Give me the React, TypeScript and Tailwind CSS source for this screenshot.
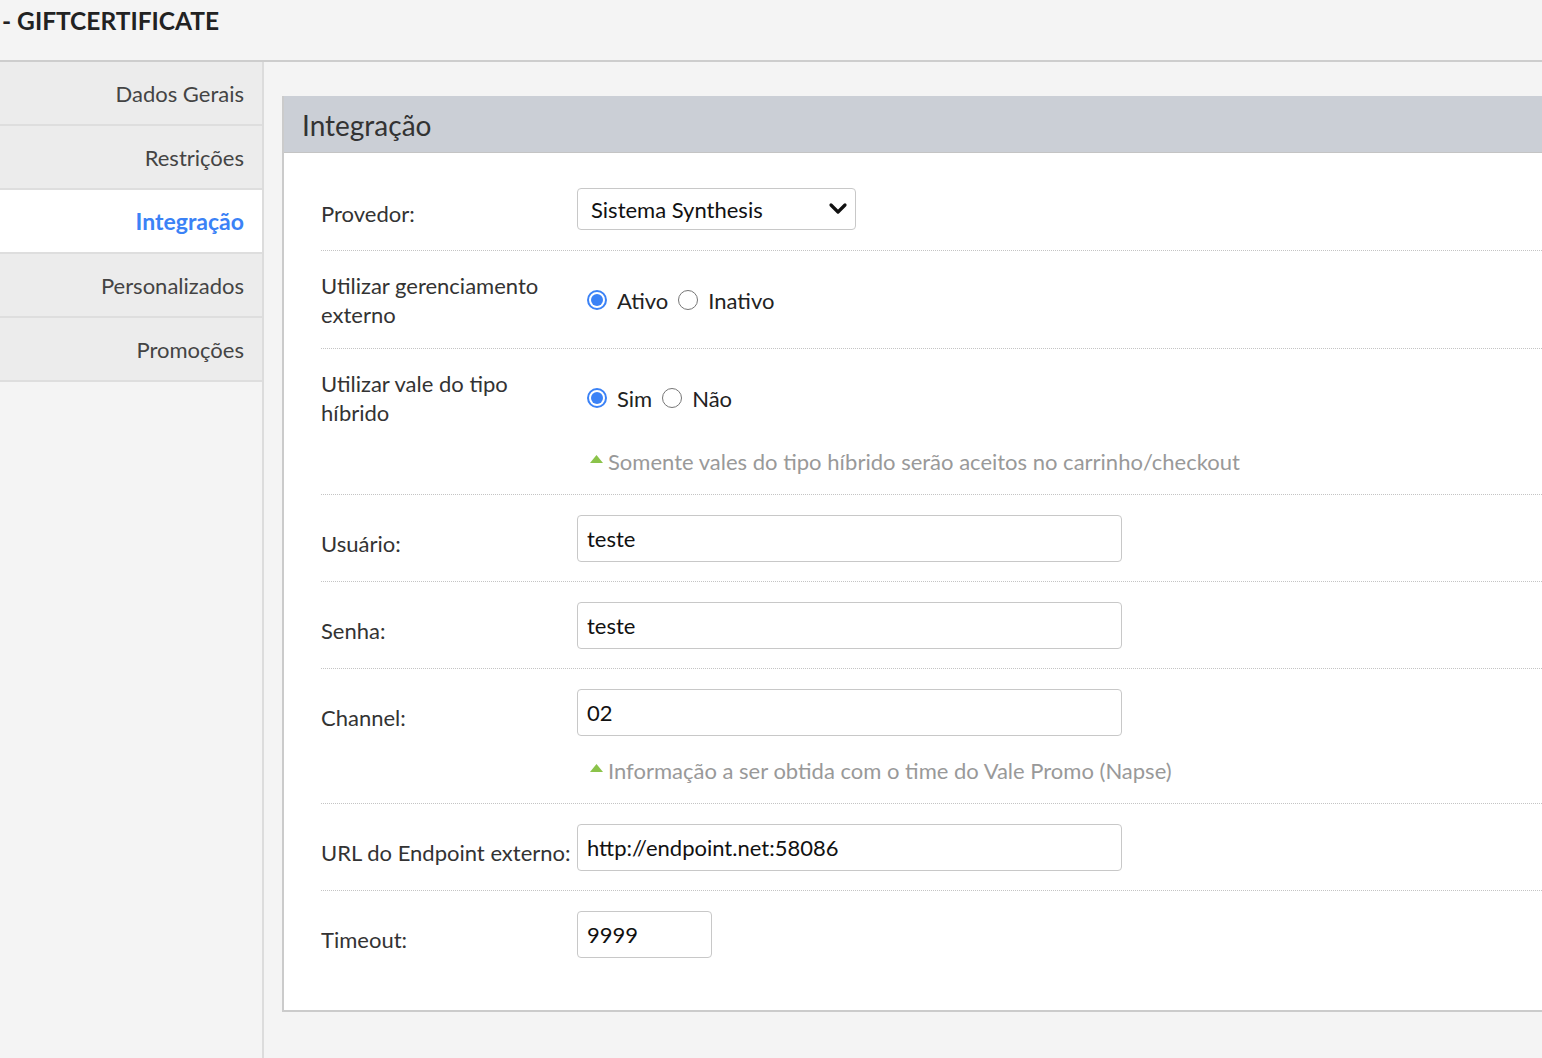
import type { ReactNode } from 'react'

const menu = ['Dados Gerais', 'Restrições', 'Integração', 'Personalizados', 'Promoções']

function Radio({ checked }: { checked?: boolean }) {
  if (checked) {
    return (
      <span className="flex h-[20px] w-[20px] shrink-0 items-center justify-center rounded-full border-2 border-[#3b82f6] bg-white">
        <span className="h-[12px] w-[12px] rounded-full bg-[#3b82f6]" />
      </span>
    )
  }
  return <span className="h-[20px] w-[20px] shrink-0 rounded-full border-[1.5px] border-[#767676] bg-white" />
}

function RadioGroup({ options }: { options: string[] }) {
  return (
    <div className="flex h-[58px] items-center pl-[10px]">
      {options.map((o, i) => (
        <label key={o} className="mr-[10px] flex items-center gap-[10px] text-[#222]">
          <Radio checked={i === 0} />
          <span>{o}</span>
        </label>
      ))}
    </div>
  )
}

function Help({ children }: { children: ReactNode }) {
  return (
    <div className="flex items-center pl-[13px] text-[#999] leading-[26px]">
      <svg width="13" height="8" viewBox="0 0 13 8" className="mr-[5px] -mt-[6px]">
        <polygon points="6.5,0 13,8 0,8" fill="#8bc34a" />
      </svg>
      <span>{children}</span>
    </div>
  )
}

function TextInput({ value, width = 'w-[545px]' }: { value: string; width?: string }) {
  return (
    <input
      readOnly
      value={value}
      className={`${width} h-[47px] rounded-[4px] border border-[#c8c8c8] bg-white pl-[9px] text-[22px] text-[#111] outline-none`}
    />
  )
}

type RowProps = {
  label: ReactNode
  labelBox?: string
  children: ReactNode
  help?: string
  last?: boolean
}

function Row({ label, labelBox = 'h-[47px] pt-[9px]', children, help, last }: RowProps) {
  return (
    <div className={`ml-[37px] ${last ? '' : 'border-b border-dotted border-[#c4c4c4]'}`}>
      <div className={`grid grid-cols-[256px_1fr] items-start pt-[20px] ${last ? 'pb-[52px]' : 'pb-[19px]'}`}>
        <div className={`flex items-center leading-[29px] text-[#333] ${labelBox}`}>{label}</div>
        <div className="flex flex-col">
          {children}
          {help && <div className="mt-[22px]"><Help>{help}</Help></div>}
        </div>
      </div>
    </div>
  )
}

export default function App() {
  return (
    <div className="flex min-h-screen flex-col bg-[#f4f4f4] font-[Lato,'Noto_Sans',sans-serif] text-[22px]">
      <header className="h-[62px] border-b-2 border-[#cdcdcd] pl-[2px] pt-[5px]">
        <h1 className="text-[24.5px] font-bold leading-[32px] text-[#222]">- GIFTCERTIFICATE</h1>
      </header>

      <div className="flex flex-1">
        <aside className="w-[264px] shrink-0 border-r-2 border-[#dcdcdc]">
          {menu.map((m) => {
            const active = m === 'Integração'
            return (
              <div
                key={m}
                className={`flex h-[64px] items-center justify-end border-b-2 border-[#dedede] pr-[18px] ${
                  active ? 'bg-white text-[23px] font-bold text-[#3b82f6]' : 'bg-[#ececec] text-[#444]'
                }`}
              >
                {m}
              </div>
            )
          })}
        </aside>

        <main className="flex-1 overflow-hidden pl-[18px] pt-[34px]">
          <section className="border-b-2 border-l-2 border-[#cbcbcb] bg-white">
            <div className="flex h-[57px] items-center border-b border-[#c4c4c4] bg-[#cbcfd6] pl-[18px] pt-[2px] text-[28px] text-[#333]">
              Integração
            </div>
            <div className="pt-[15px]">
              <Row label="Provedor:" labelBox="h-[42px] pt-[9px]">
                <div className="mb-[1px] flex h-[42px] w-[279px] items-center justify-between rounded-[4px] border border-[#c8c8c8] bg-white pl-[13px] pr-[7px] text-[#111]">
                  <span>Sistema Synthesis</span>
                  <svg width="20" height="14" viewBox="0 0 20 14">
                    <polyline points="3,3 10,10 17,3" fill="none" stroke="#111" strokeWidth="3.2" strokeLinecap="round" strokeLinejoin="round" />
                  </svg>
                </div>
              </Row>
              <Row label={<span>Utilizar gerenciamento<br />externo</span>} labelBox="h-[58px]">
                <RadioGroup options={['Ativo', 'Inativo']} />
              </Row>
              <Row
                label={<span>Utilizar vale do tipo<br />híbrido</span>}
                labelBox="h-[58px]"
                help="Somente vales do tipo híbrido serão aceitos no carrinho/checkout"
              >
                <RadioGroup options={['Sim', 'Não']} />
              </Row>
              <Row label="Usuário:"><TextInput value="teste" /></Row>
              <Row label="Senha:"><TextInput value="teste" /></Row>
              <Row label="Channel:" help="Informação a ser obtida com o time do Vale Promo (Napse)">
                <TextInput value="02" />
              </Row>
              <Row label="URL do Endpoint externo:"><TextInput value="http://endpoint.net:58086" /></Row>
              <Row label="Timeout:" last><TextInput value="9999" width="w-[135px]" /></Row>
            </div>
          </section>
        </main>
      </div>
    </div>
  )
}
